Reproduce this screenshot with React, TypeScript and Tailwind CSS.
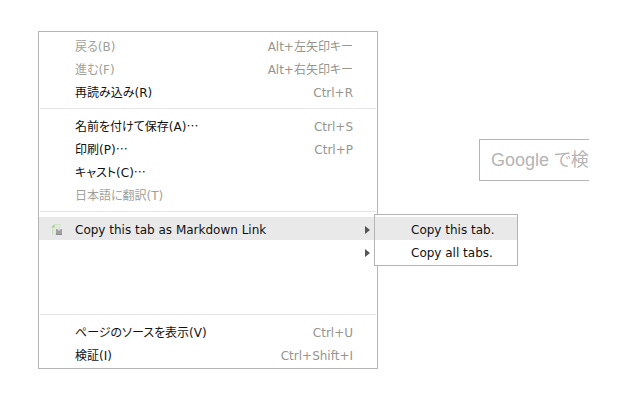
import React from "react";
import clsx from "clsx";

type ItemProps = {
  label?: string;
  mnemonic?: string;
  dots?: boolean;
  shortcut?: string;
  disabled?: boolean;
  active?: boolean;
  submenu?: boolean;
  icon?: React.ReactNode;
};

function MenuItem({
  label,
  mnemonic,
  dots,
  shortcut,
  disabled,
  active,
  submenu,
  icon,
}: ItemProps) {
  return (
    <button
      type="button"
      role="menuitem"
      disabled={disabled}
      aria-haspopup={submenu ? "menu" : undefined}
      aria-label={label ? undefined : "More"}
      className={clsx(
        "flex h-[23px] w-full items-center whitespace-nowrap pt-0.5 text-left",
        disabled ? "text-[#a09f98]" : "text-[#111]",
        active && "bg-[#e9e9e9]"
      )}
    >
      <span className="flex w-9 shrink-0 justify-center">{icon}</span>
      <span className="grow">
        {label}
        {mnemonic}
        {dots && (
          <span lang="ja" className="font-['Noto_Sans_CJK_JP',sans-serif]">
            …
          </span>
        )}
      </span>
      {shortcut && <span className="pr-6 text-[#96958e]">{shortcut}</span>}
      {submenu && (
        <svg viewBox="0 0 5 8" className="mr-[7px] h-2 w-[5px]" aria-hidden="true">
          <path d="M0 0L5 4L0 8Z" fill="#555" />
        </svg>
      )}
    </button>
  );
}

function Separator() {
  return <hr className="mx-px my-[5px] border-t border-[#e6e6e6]" />;
}

function PageIcon() {
  return (
    <svg viewBox="0 0 12 12" className="h-3 w-3" aria-hidden="true">
      <path d="M4 0H10V11H1V3Z" fill="#e1e6de" />
      <path d="M0 3.5L3.5 0V3.5Z" fill="#a5d38c" />
      <path d="M4 0.5H10" stroke="#cfe3c4" />
      <path d="M1.5 4V11" stroke="#cfe0c5" />
      <path d="M5 5H11V11H5Z" fill="#a0a0a0" />
      <path d="M6 5L8 7L10 5Z" fill="#dcdcdc" />
      <path d="M5 10.5H11" stroke="#8b8b8b" />
    </svg>
  );
}

const panel = "border border-[#b4b4b4] bg-white py-0.5";

export default function App() {
  return (
    <main className="flex min-h-screen items-start overflow-hidden bg-white pt-[31px] pr-[51px] pl-[38px] font-['DejaVu_Sans','Noto_Sans_CJK_JP',sans-serif] text-xs [font-feature-settings:'palt']">
      <div role="menu" className={clsx(panel, "grow")}>
        <MenuItem label="戻る" mnemonic="(B)" shortcut="Alt+左矢印キー" disabled />
        <MenuItem label="進む" mnemonic="(F)" shortcut="Alt+右矢印キー" disabled />
        <MenuItem label="再読み込み" mnemonic="(R)" shortcut="Ctrl+R" />
        <Separator />
        <MenuItem label="名前を付けて保存" mnemonic="(A)" dots shortcut="Ctrl+S" />
        <MenuItem label="印刷" mnemonic="(P)" dots shortcut="Ctrl+P" />
        <MenuItem label="キャスト" mnemonic="(C)" dots />
        <MenuItem label="日本語に翻訳" mnemonic="(T)" disabled />
        <Separator />
        <div className="relative">
          <MenuItem
            label="Copy this tab as Markdown Link"
            icon={<PageIcon />}
            active
            submenu
          />
          <div
            role="menu"
            className={clsx(panel, "absolute -top-[3px] left-full -ml-[3px] w-36")}
          >
            <MenuItem label="Copy this tab." active />
            <MenuItem label="Copy all tabs." />
          </div>
        </div>
        <MenuItem submenu />
        <div className="h-[46px]" />
        <Separator />
        <MenuItem label="ページのソースを表示" mnemonic="(V)" shortcut="Ctrl+U" />
        <MenuItem label="検証" mnemonic="(I)" shortcut="Ctrl+Shift+I" />
      </div>
      <div className="mt-27 ml-[101px] w-[110px] shrink-0 overflow-hidden">
        <input
          type="text"
          aria-label="Google で検索"
          placeholder="Google で検索"
          className="h-[42px] w-60 border border-[#b4b4b4] px-[11px] font-['Liberation_Sans','Noto_Sans_CJK_JP',sans-serif] text-lg [font-feature-settings:'palt'] placeholder:text-[#b5b5b5]"
        />
      </div>
    </main>
  );
}
